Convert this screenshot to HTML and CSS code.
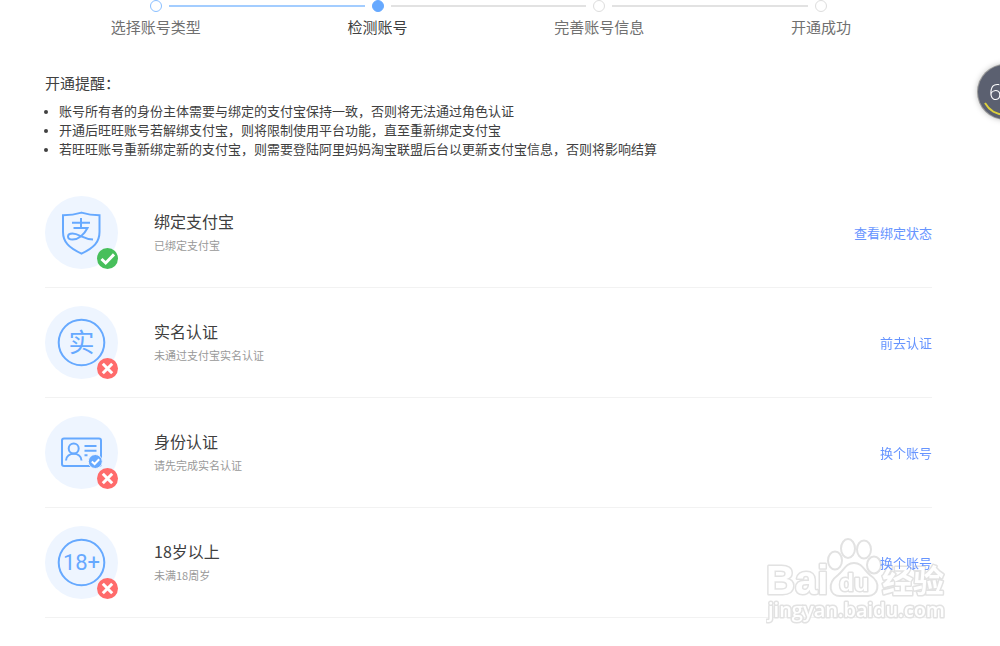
FILE: index.html
```
<!DOCTYPE html>
<html lang="zh-CN">
<head>
    <meta charset="UTF-8">
    <meta name="viewport" content="width=device-width, initial-scale=1.0">
    <title>检测账号</title>
    <link rel="stylesheet" href="styles.css">
</head>
<body>
    <main>
        <ol class="steps">
            <li class="step done"><span class="track"><i class="dot"></i></span>选择账号类型</li>
            <li class="step current"><span class="track"><i class="dot"></i></span>检测账号</li>
            <li class="step"><span class="track"><i class="dot"></i></span>完善账号信息</li>
            <li class="step"><span class="track"><i class="dot"></i></span>开通成功</li>
        </ol>

        <section class="notice">
            <h2>开通提醒：</h2>
            <ul>
                <li>账号所有者的身份主体需要与绑定的支付宝保持一致，否则将无法通过角色认证</li>
                <li>开通后旺旺账号若解绑支付宝，则将限制使用平台功能，直至重新绑定支付宝</li>
                <li>若旺旺账号重新绑定新的支付宝，则需要登陆阿里妈妈淘宝联盟后台以更新支付宝信息，否则将影响结算</li>
            </ul>
        </section>

        <section class="checks">
            <div class="check">
                <svg class="icon" viewBox="0 0 73 73">
                    <circle class="bg" cx="36.5" cy="36.5" r="36.5"/>
                    <path class="line" d="M18 19.2Q28 19.2 36.5 16.6Q45 19.2 54.5 19.2V36C54.5 46 49 52 36.5 57.6C24 52 18 46 18 36Z"/>
                    <path class="line" d="M36 22V32M27 26.8H45M28.5 32H42.5C39 39 33 43.6 27.5 43.6C21.5 43.6 21.5 37.6 27.5 37.6C34 37.6 38 43 48 43.6"/>
                    <circle class="ok" cx="62.5" cy="62.5" r="10.5"/>
                    <path class="mark" d="M56.5 63L60.7 67L69 58.4"/>
                </svg>
                <div class="info">
                    <h3>绑定支付宝</h3>
                    <p>已绑定支付宝</p>
                </div>
                <a href="#">查看绑定状态</a>
            </div>
            <div class="check">
                <svg class="icon" viewBox="0 0 73 73">
                    <circle class="bg" cx="36.5" cy="36.5" r="36.5"/>
                    <circle class="line" cx="36.5" cy="36.5" r="22.8"/>
                    <text class="han" x="36.5" y="46">实</text>
                    <circle class="fail" cx="62.5" cy="62.5" r="10.5"/>
                    <path class="mark" d="M57.8 57.8L67.2 67.2M67.2 57.8L57.8 67.2"/>
                </svg>
                <div class="info">
                    <h3>实名认证</h3>
                    <p>未通过支付宝实名认证</p>
                </div>
                <a href="#">前去认证</a>
            </div>
            <div class="check">
                <svg class="icon" viewBox="0 0 73 73">
                    <circle class="bg" cx="36.5" cy="36.5" r="36.5"/>
                    <rect class="line" x="17" y="22.5" width="39" height="27.5" rx="2"/>
                    <circle class="line" cx="28.7" cy="32.5" r="5"/>
                    <path class="line" d="M21 44.5C21 35.5 36.5 35.5 36.5 44.5M39.5 30H51.5M39.5 34.7H51.5M39.5 39.3H42.5"/>
                    <circle class="seal" cx="50.3" cy="45.5" r="7"/>
                    <path class="tick" d="M46.8 45.4L49.6 48L54.2 43.2"/>
                    <circle class="fail" cx="62.5" cy="62.5" r="10.5"/>
                    <path class="mark" d="M57.8 57.8L67.2 67.2M67.2 57.8L57.8 67.2"/>
                </svg>
                <div class="info">
                    <h3>身份认证</h3>
                    <p>请先完成实名认证</p>
                </div>
                <a href="#">换个账号</a>
            </div>
            <div class="check">
                <svg class="icon" viewBox="0 0 73 73">
                    <circle class="bg" cx="36.5" cy="36.5" r="36.5"/>
                    <circle class="line" cx="36.5" cy="36.5" r="22.8"/>
                    <text class="age" x="36.5" y="44">18+</text>
                    <circle class="fail" cx="62.5" cy="62.5" r="10.5"/>
                    <path class="mark" d="M57.8 57.8L67.2 67.2M67.2 57.8L57.8 67.2"/>
                </svg>
                <div class="info">
                    <h3>18岁以上</h3>
                    <p>未满18周岁</p>
                </div>
                <a href="#">换个账号</a>
            </div>
        </section>
    </main>

    <div class="float-ball">
        <svg viewBox="0 0 54 54">
            <path d="M7 38A23 23 0 0 0 47 38"/>
            <text x="11" y="35">6</text>
        </svg>
    </div>

    <svg class="watermark" viewBox="0 0 184 88">
        <text class="bai" x="0" y="56">Bai</text>
        <ellipse cx="69" cy="22.5" rx="7" ry="9"/>
        <ellipse cx="82" cy="10.5" rx="7" ry="9.5"/>
        <ellipse cx="98" cy="11.5" rx="7" ry="9"/>
        <ellipse cx="108" cy="27" rx="7" ry="8.5"/>
        <path d="M88 25C96 25 98 32 104 37C116 45 112 58 102 58C94 58 82 58 74 58C64 58 60 46 72 37C78 32 80 25 88 25Z"/>
        <text class="du" x="88" y="53">du</text>
        <text class="jingyan" x="116" y="54">经验</text>
        <text class="site" x="2" y="79">jingyan.baidu.com</text>
    </svg>
</body>
</html>
```

FILE: styles.css
```
body {
    margin: 0;
    background-color: #fff;
    color: #404040;
    font-family: "Noto Sans CJK SC", sans-serif;
    font-size: 13px;
}
main {
    margin: 0 68px 0 45px;
}
h2, h3, p, ul, ol {
    margin: 0;
    padding: 0;
    font-weight: normal;
}

/* steps */
.steps {
    display: grid;
    grid-template-columns: repeat(4, 1fr);
    list-style: none;
    font-size: 15px;
    line-height: 20px;
    color: #707070;
    text-align: center;
}
.track {
    display: flex;
    align-items: center;
    gap: 7px;
    margin-bottom: 5px;
}
.track::before, .track::after {
    content: "";
    flex: 1;
    height: 2px;
    background-color: #e2e2e2;
}
.dot {
    box-sizing: border-box;
    width: 12px;
    height: 12px;
    border: 1px solid #ddd;
    border-radius: 50%;
}
.step:first-child .track::before, .step:last-child .track::after {
    background-color: transparent;
}
.done .track::after, .current .track::before {
    background-color: #a3cdff;
}
.done .dot {
    border-color: #8abfff;
}
.current {
    color: #404040;
}
.current .dot {
    border-color: #66a9ff;
    background-color: #66a9ff;
}

/* notice */
.notice {
    margin-top: 36px;
    padding-bottom: 20px;
}
.notice h2 {
    margin-bottom: 8px;
    font-size: 15px;
    line-height: 20px;
}
.notice ul {
    padding-left: 14px;
    line-height: 19px;
}
.notice li::marker {
    font-size: 11px;
}

/* account checks */
.check {
    display: flex;
    align-items: center;
    gap: 36px;
    padding: 18px 0;
    border-bottom: 1px solid #f2f2f2;
}
.icon {
    width: 73px;
    height: 73px;
}
.info {
    flex: 1;
}
.info h3 {
    margin-bottom: 2px;
    font-size: 16px;
    line-height: 24px;
}
.info p {
    margin-bottom: 2px;
    color: #999;
    font-size: 11px;
    line-height: 20px;
}
.check a {
    position: relative;
    z-index: 1;
    color: #6694ff;
    text-decoration: none;
}
.bg {
    fill: #eef5ff;
}
.line {
    fill: none;
    stroke: #66a9ff;
    stroke-width: 2;
}
.icon text {
    fill: #66a9ff;
    text-anchor: middle;
}
.han {
    font-size: 26px;
}
.age {
    font-family: Roboto, sans-serif;
    font-size: 22px;
}
.ok {
    fill: #47bf5b;
}
.fail {
    fill: #ff6b6b;
}
.seal {
    fill: #66a9ff;
    stroke: #eef5ff;
}
.mark {
    fill: none;
    stroke: #fff;
    stroke-width: 3;
}
.tick {
    fill: none;
    stroke: #fff;
    stroke-width: 2;
}

/* floating ball, partly outside the window */
.float-ball {
    position: fixed;
    top: 65px;
    right: -32px;
    width: 54px;
    height: 54px;
    border-radius: 50%;
    background-color: #5b6070;
    box-shadow: 0 0 0 1px #999, 0 0 6px #aaa;
}
.float-ball path {
    fill: none;
    stroke: #dcd03c;
    stroke-width: 2;
}
.float-ball text {
    fill: #fff;
    font-family: "Open Sans", sans-serif;
    font-size: 22px;
    font-weight: 300;
}

/* watermark */
.watermark {
    position: fixed;
    right: 50px;
    bottom: 20px;
    width: 184px;
    height: 88px;
    fill: #fff;
    stroke: #e2e2e2;
    stroke-width: 2;
    stroke-linejoin: round;
    pointer-events: none;
}
.watermark text {
    font-family: "Liberation Sans", "Noto Sans CJK SC", sans-serif;
    font-weight: bold;
    paint-order: stroke;
    stroke-width: 3;
}
.watermark .bai {
    font-size: 40px;
}
.watermark .du {
    font-size: 24px;
    text-anchor: middle;
}
.watermark .jingyan {
    font-size: 31px;
}
.watermark .site {
    font-family: "Open Sans", sans-serif;
    font-size: 20px;
    font-weight: 600;
}
```
